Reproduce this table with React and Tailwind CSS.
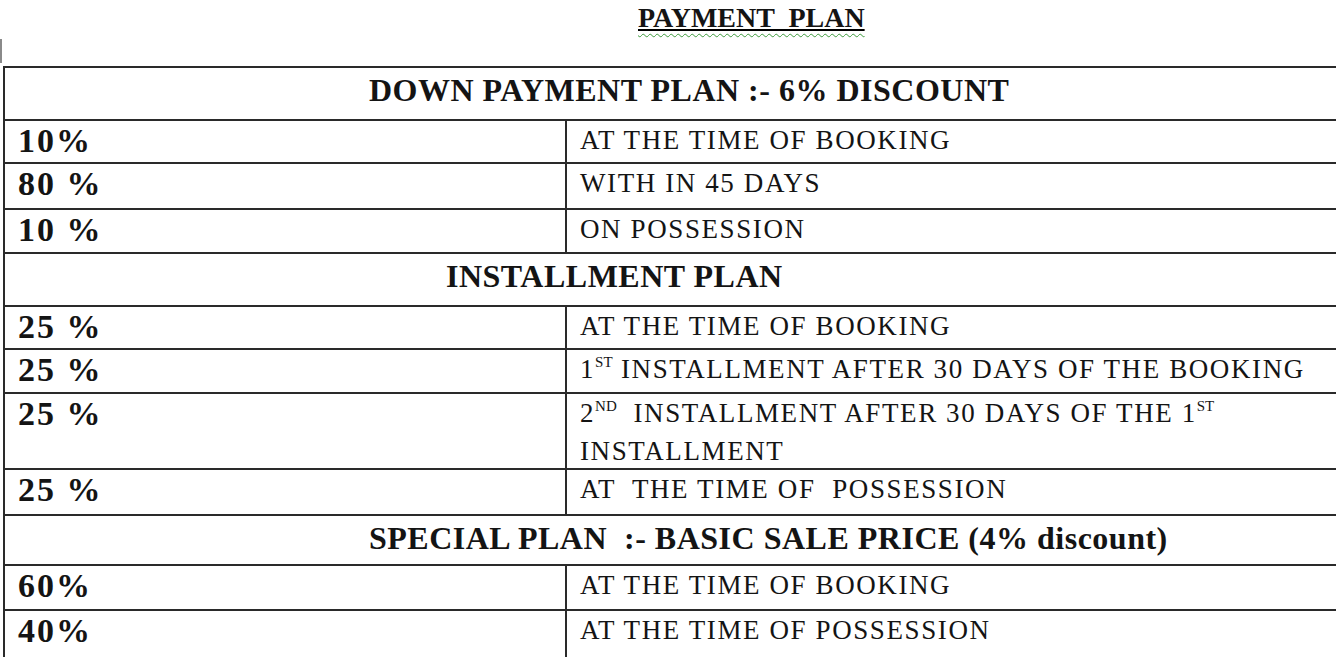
import React from 'react'

const serif = { fontFamily: '"Liberation Serif", "Times New Roman", serif' }

const sup = 'text-[15px] align-[4px] tracking-normal'

const rows = [
  { type: 'head', text: 'DOWN PAYMENT PLAN :- 6% DISCOUNT', h: 'h-[53px]', pl: 'pl-[364px]' },
  { pct: '10%', text: 'AT THE TIME OF BOOKING', h: 'h-[43px]' },
  { pct: '80 %', text: 'WITH IN 45 DAYS', h: 'h-[46px]' },
  { pct: '10 %', text: 'ON POSSESSION', h: 'h-[44px]' },
  { type: 'head', text: 'INSTALLMENT PLAN', h: 'h-[53px]', pl: 'pl-[441px]' },
  { pct: '25 %', text: 'AT THE TIME OF BOOKING', h: 'h-[43px]' },
  { pct: '25 %', text: <>1<sup className={sup}>ST</sup> INSTALLMENT AFTER 30 DAYS OF THE BOOKING</>, h: 'h-[44px]' },
  {
    pct: '25 %',
    text: <>2<sup className={sup}>ND</sup>  INSTALLMENT AFTER 30 DAYS OF THE 1<sup className={sup}>ST</sup><br />INSTALLMENT</>,
    h: 'h-[76px]',
  },
  { pct: '25 %', text: 'AT  THE TIME OF  POSSESSION', h: 'h-[46px]' },
  { type: 'head', text: 'SPECIAL PLAN  :- BASIC SALE PRICE (4% discount)', h: 'h-[50px]', pl: 'pl-[364px]' },
  { pct: '60%', text: 'AT THE TIME OF BOOKING', h: 'h-[45px]' },
  { pct: '40%', text: 'AT THE TIME OF POSSESSION', h: 'h-[60px]' },
]

function HeadRow({ row }) {
  return (
    <div className={`${row.h} border-b-2 border-[#2a2a2a] ${row.pl} pt-[4px]`}>
      <span className="text-[32px] leading-[36px] font-bold tracking-[0.5px] whitespace-pre">{row.text}</span>
    </div>
  )
}

function PlanRow({ row }) {
  return (
    <div className={`${row.h} flex border-b-2 border-[#2a2a2a]`}>
      <div className="w-[560px] pl-[13px] pt-[2px] text-[34px] leading-[36px] font-bold tracking-[2px] whitespace-pre">
        {row.pct}
      </div>
      <div className="flex-1 border-l-2 border-[#2a2a2a] pl-[13px] pt-0 text-[27px] leading-[38px] tracking-[1.6px] whitespace-pre">
        {row.text}
      </div>
    </div>
  )
}

export default function App() {
  return (
    <div className="w-[1336px] h-[657px] overflow-hidden bg-white text-[#141414]" style={serif}>
      <div className="h-[39px] pl-[638px] pt-[3px]">
        <span className="text-[28px] leading-[30px] font-bold whitespace-pre underline decoration-wavy decoration-[#3c9a3c] decoration-1 underline-offset-[6px]">
          <span className="underline decoration-black decoration-[1.5px] underline-offset-[2px]">PAYMENT  PLAN</span>
        </span>
      </div>
      <div className="h-[24px] w-[2px] bg-[#8a8a8a]"></div>
      <div className="mt-[3px] ml-[3px] w-[1380px] border-t-2 border-l-2 border-[#2a2a2a]">
        {rows.map((row, i) =>
          row.type === 'head' ? <HeadRow key={i} row={row} /> : <PlanRow key={i} row={row} />
        )}
      </div>
    </div>
  )
}
